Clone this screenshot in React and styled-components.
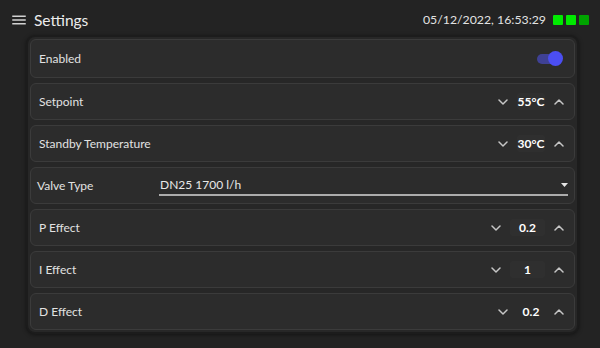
import React from 'react';
import styled, { createGlobalStyle } from 'styled-components';

const GlobalStyle = createGlobalStyle`
  html, body { margin: 0; padding: 0; background: #232323; }
  body { font-family: Lato, "Open Sans", sans-serif; color: #e4e4e4; }
  * { box-sizing: border-box; }
`;

const Page = styled.div`
  width: 600px;
  height: 348px;
  background: #232323;
  display: flex;
  flex-direction: column;
`;

const Header = styled.header`
  height: 35px;
  padding: 4px 11px 0 10px;
  display: flex;
  align-items: center;
`;

const MenuButton = styled.span`
  display: flex;
  width: 18px;
  height: 18px;
  color: #d2d2d2;
`;

const Title = styled.h1`
  margin: 0 0 0 6px;
  flex: 1;
  font-size: 15.5px;
  font-weight: 400;
  color: #ececec;
`;

const Clock = styled.span`
  font-size: 12.3px;
  color: #e2e2e2;
`;

const Leds = styled.div`
  display: flex;
  gap: 3px;
  margin-left: 7px;
`;

const Led = styled.span`
  width: 10px;
  height: 10px;
  border-radius: 1px;
  background: ${(p) => (p.$dim ? '#00a400' : '#00ea00')};
`;

const Panel = styled.section`
  margin: 0 21px 0 26px;
  padding: 2px;
  border: 2px solid #1c1c1c;
  border-radius: 9px;
  background: #272727;
  box-shadow: 0 1px 4px rgba(0, 0, 0, 0.45);
  display: flex;
  flex-direction: column;
  gap: 5px;
`;

const Card = styled.div`
  height: ${(p) => (p.$tall ? 39 : 37)}px;
  border: 1px solid #3b3b3b;
  border-radius: 6px;
  background: #2c2c2c;
  display: flex;
  align-items: center;
  padding: 0 ${(p) => p.$pr ?? 5}px 0 ${(p) => p.$pl ?? 8}px;
`;

const Label = styled.span`
  flex: ${(p) => (p.$width ? '0 0 auto' : '1')};
  width: ${(p) => (p.$width ? `${p.$width}px` : 'auto')};
  font-size: 12px;
  color: #e2e2e2;
`;

const SwitchRoot = styled.span`
  position: relative;
  width: 26px;
  height: 15px;
`;

const SwitchTrack = styled.span`
  position: absolute;
  left: 0;
  top: 2.5px;
  width: 22px;
  height: 10px;
  border-radius: 5px;
  background: #3f4195;
`;

const SwitchThumb = styled.span`
  position: absolute;
  right: 0;
  top: 0;
  width: 15px;
  height: 15px;
  border-radius: 50%;
  background: #4b4ef2;
`;

const Stepper = styled.div`
  display: flex;
  align-items: center;
  gap: 4px;
`;

const StepButton = styled.button`
  width: 20px;
  height: 20px;
  padding: 0;
  border: none;
  background: transparent;
  color: #c6c6c6;
  display: flex;
  align-items: center;
  justify-content: center;
`;

const Value = styled.span`
  width: ${(p) => p.$width}px;
  height: 17px;
  border-radius: 2px;
  background: ${(p) => (p.$plain ? 'transparent' : '#2f2f2f')};
  display: flex;
  align-items: center;
  justify-content: center;
  font-size: 12px;
  font-weight: 700;
  color: #ffffff;
`;

const Select = styled.div`
  flex: 1;
  height: 20px;
  border-bottom: 2px solid #acacac;
  display: flex;
  align-items: center;
  justify-content: space-between;
  padding-left: 1px;
  font-size: 12px;
  color: #e8e8e8;
`;

const Chevron = ({ up }) => (
  <svg width="10" height="6" viewBox="0 0 10 6" fill="none">
    <polyline
      points={up ? '1,5 5,1 9,5' : '1,1 5,5 9,1'}
      stroke="currentColor"
      strokeWidth="1.5"
      strokeLinecap="round"
      strokeLinejoin="round"
    />
  </svg>
);

const MenuIcon = () => (
  <svg width="18" height="18" viewBox="0 0 24 24" fill="currentColor">
    <path d="M3 18h18v-2H3v2zm0-5h18v-2H3v2zm0-7v2h18V6H3z" />
  </svg>
);

const Caret = () => (
  <svg width="7" height="4" viewBox="0 0 7 4">
    <polygon points="0,0 7,0 3.5,4" fill="#e6e6e6" />
  </svg>
);

const NumberRow = ({ label, value, width = 28, plain }) => (
  <Card>
    <Label>{label}</Label>
    <Stepper>
      <StepButton aria-label="decrease">
        <Chevron />
      </StepButton>
      <Value $width={width} $plain={plain}>
        {value}
      </Value>
      <StepButton aria-label="increase">
        <Chevron up />
      </StepButton>
    </Stepper>
  </Card>
);

export default function App() {
  return (
    <Page>
      <GlobalStyle />
      <Header>
        <MenuButton>
          <MenuIcon />
        </MenuButton>
        <Title>Settings</Title>
        <Clock>05/12/2022, 16:53:29</Clock>
        <Leds>
          <Led />
          <Led />
          <Led $dim />
        </Leds>
      </Header>
      <Panel>
        <Card $tall $pr={11}>
          <Label>Enabled</Label>
          <SwitchRoot>
            <SwitchTrack />
            <SwitchThumb />
          </SwitchRoot>
        </Card>
        <NumberRow label="Setpoint" value="55°C" />
        <NumberRow label="Standby Temperature" value="30°C" />
        <Card $pl={6} $pr={6}>
          <Label $width={122}>Valve Type</Label>
          <Select>
            <span>DN25 1700 l/h</span>
            <Caret />
          </Select>
        </Card>
        <NumberRow label="P Effect" value="0.2" width={35} />
        <NumberRow label="I Effect" value="1" width={35} />
        <NumberRow label="D Effect" value="0.2" plain />
      </Panel>
    </Page>
  );
}
